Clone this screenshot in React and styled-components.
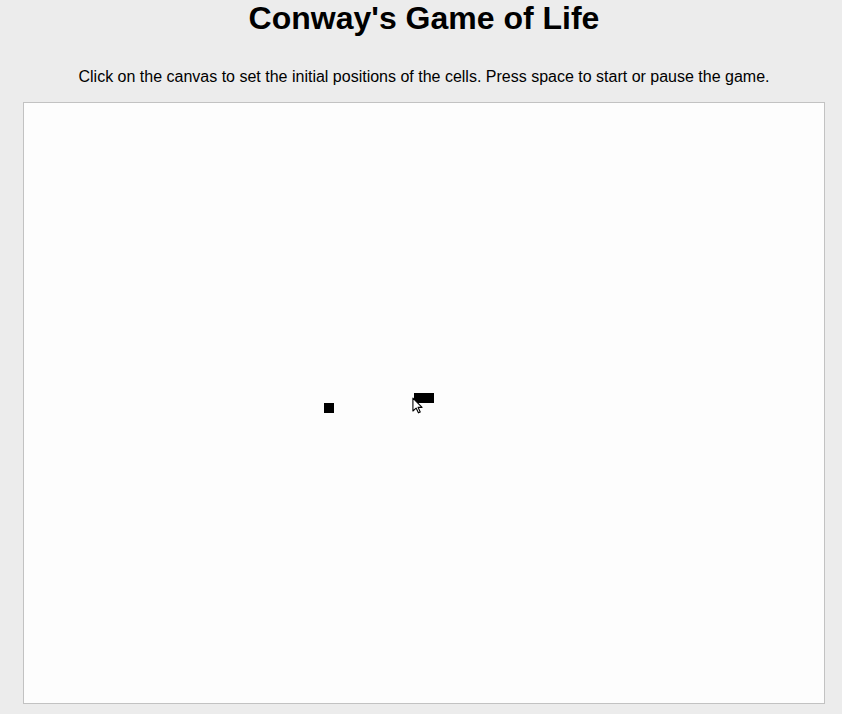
import React from 'react';
import styled, { createGlobalStyle } from 'styled-components';

const GlobalStyle = createGlobalStyle`
  html, body {
    margin: 0;
    padding: 0;
    background-color: #ececec;
    font-family: "Liberation Sans", Arial, sans-serif;
    color: #000;
  }
`;

const CELL = 10;
const COLS = 80;
const ROWS = 60;

// live cells, [col, row]
const cells = [
  [30, 30],
  [39, 29],
  [40, 29],
];

const Page = styled.main`
  width: 802px;
  margin-left: 23px;
  display: flex;
  flex-direction: column;
  align-items: center;
`;

const Title = styled.h1`
  margin: 0;
  font-size: 32px;
  line-height: 36px;
  font-weight: bold;
  white-space: nowrap;
`;

const Hint = styled.p`
  margin: 32px 0 16px;
  font-size: 16px;
  line-height: 18px;
  white-space: nowrap;
`;

const BoardFrame = styled.div`
  position: relative;
  width: ${COLS * CELL}px;
  height: ${ROWS * CELL}px;
  border: 1px solid #c2c2c2;
  background-color: #fdfdfd;
`;

const Board = styled.svg`
  display: block;
`;

const Cursor = styled.svg`
  position: absolute;
  left: ${({ x }) => x}px;
  top: ${({ y }) => y}px;
`;

const App = () => (
  <>
    <GlobalStyle />
    <Page>
      <Title>Conway's Game of Life</Title>
      <Hint>
        Click on the canvas to set the initial positions of the cells. Press space to start or pause the game.
      </Hint>
      <BoardFrame>
        <Board width={COLS * CELL} height={ROWS * CELL}>
          {cells.map(([c, r]) => (
            <rect key={`${c}-${r}`} x={c * CELL} y={r * CELL} width={CELL} height={CELL} fill="#000" />
          ))}
        </Board>
        <Cursor x={388} y={294} width="11" height="17" viewBox="0 0 12 18">
          <path
            d="M1 1 L1 15 L4.5 11.8 L7 17 L9 16 L6.6 11 L11 11 Z"
            fill="#fff"
            stroke="#000"
            strokeWidth="1.2"
            strokeLinejoin="round"
          />
        </Cursor>
      </BoardFrame>
    </Page>
  </>
);

export default App;
